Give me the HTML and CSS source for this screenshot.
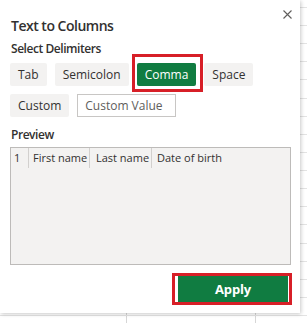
FILE: index.html
```html
<!DOCTYPE html>
<html lang="en">
<head>
    <meta charset="UTF-8">
    <meta name="viewport" content="width=device-width, initial-scale=1.0">
    <title>Text to Columns</title>
    <link rel="stylesheet" href="styles.css">
</head>
<body>
    <div class="panel">
        <div class="header">
            <h1 class="title">Text to Columns</h1>
            <button class="close" aria-label="Close">
                <svg width="9" height="9" viewBox="0 0 9 9">
                    <path d="M0.5 0.5 L8.5 8.5 M8.5 0.5 L0.5 8.5" stroke="#605e5c" stroke-width="1.1" fill="none"/>
                </svg>
            </button>
        </div>

        <div class="label">Select Delimiters</div>
        <div class="delimiters">
            <button class="chip">Tab</button>
            <button class="chip">Semicolon</button>
            <button class="chip chip-active marked">Comma</button>
            <button class="chip">Space</button>
            <button class="chip">Custom</button>
            <input class="custom-input" type="text" placeholder="Custom Value">
        </div>

        <div class="label label-preview">Preview</div>
        <div class="preview">
            <div class="preview-head">
                <div class="cell cell-num">1</div>
                <div class="cell cell-first">First name</div>
                <div class="cell cell-last">Last name</div>
                <div class="cell cell-date">Date of birth</div>
            </div>
        </div>

        <div class="footer">
            <button class="apply marked-apply">Apply</button>
        </div>
    </div>
</body>
</html>
```

FILE: styles.css
```css
* {
    margin: 0;
    padding: 0;
    box-sizing: border-box;
}

body {
    width: 307px;
    height: 323px;
    overflow: hidden;
    font-family: "Segoe UI", "Open Sans", sans-serif;
    color: #323130;
    background-color: #fff;
    background-image:
        repeating-linear-gradient(to bottom, transparent 0 7px, #e3e3e3 7px 8px, transparent 8px 18.12px),
        repeating-linear-gradient(to right, transparent 0 126px, #d6d6d6 126px 127px, transparent 127px 129px);
}

.panel {
    width: 300px;
    height: 313px;
    background: #fff;
    box-shadow: 1px 1px 4px rgba(0, 0, 0, 0.22);
    padding: 0 9px 0 10px;
    display: flex;
    flex-direction: column;
}

.header {
    display: flex;
    justify-content: space-between;
    align-items: flex-start;
}

.title {
    margin-top: 15px;
    margin-left: 1px;
    font-size: 14px;
    line-height: 22px;
    font-weight: 600;
    letter-spacing: -0.5px;
    color: #323130;
}

.close {
    margin-top: 10px;
    margin-right: -1px;
    width: 9px;
    height: 9px;
    border: none;
    background: transparent;
    display: flex;
    cursor: pointer;
}

.label {
    margin-top: 3px;
    margin-left: 1px;
    font-size: 12px;
    line-height: 18px;
    font-weight: 600;
    letter-spacing: -0.45px;
}

.delimiters {
    margin-top: 5px;
    display: flex;
    flex-wrap: wrap;
    gap: 8px;
}

.chip {
    position: relative;
    height: 23px;
    padding: 0 8px;
    border: none;
    border-radius: 2px;
    background: #f3f2f1;
    color: #323130;
    font-family: inherit;
    font-size: 12px;
    cursor: pointer;
}

.chip-active {
    background: #107c41;
    color: #fff;
}

.marked::after {
    content: "";
    position: absolute;
    top: -9px;
    right: -7px;
    bottom: -6px;
    left: -5px;
    border: 3px solid #d71f27;
}

.custom-input {
    width: 99px;
    height: 23px;
    border: 1px solid #c8c6c4;
    padding: 0 7px;
    font-family: inherit;
    font-size: 12px;
    color: #323130;
    outline: none;
}

.custom-input::placeholder {
    color: #605e5c;
}

.label-preview {
    margin-top: 9px;
}

.preview {
    margin-top: 3px;
    height: 118px;
    background: #f3f2f1;
    border: 1px solid #bdbbb9;
}

.preview-head {
    display: flex;
    height: 20px;
    font-size: 11px;
    line-height: 20px;
}

.cell {
    padding-left: 4px;
    border-right: 1px solid #d2d0ce;
    white-space: nowrap;
}

.cell-num {
    width: 18px;
    padding-left: 3px;
}

.cell-first {
    width: 61px;
}

.cell-last {
    width: 62px;
    padding-left: 6px;
}

.cell-date {
    border-right: none;
    padding-left: 5px;
}

.footer {
    margin-top: 11px;
    display: flex;
    justify-content: flex-end;
    padding-right: 3px;
}

.apply {
    position: relative;
    width: 110px;
    height: 26px;
    border: none;
    background: #107c41;
    color: #fff;
    font-family: inherit;
    font-size: 13px;
    font-weight: 700;
    letter-spacing: -0.2px;
    cursor: pointer;
}

.marked-apply::after {
    content: "";
    position: absolute;
    top: -3px;
    right: -4px;
    bottom: -3px;
    left: -6px;
    border: 3px solid #d71f27;
}
```
